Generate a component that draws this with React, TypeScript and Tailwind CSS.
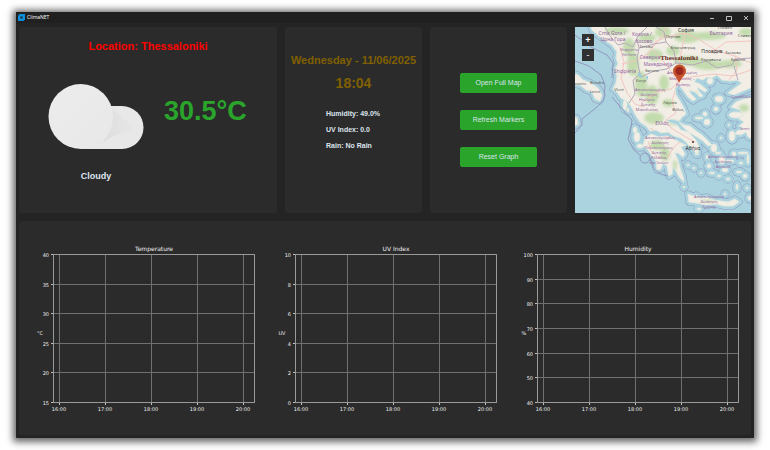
import React from "react";

const LAND = [
  // Balkans and mainland Greece
  "M15 -4 L17 3 L24 9 L31 14 L37 18 L42 25 L41 31 L43 37 L40 42 L42 49 L41 56 L38 62 L42 65 L46 71 L53 75 L57 81 L61 89 L65 95 L71 99 L75 104 L81 103 L86 106 L93 105 L99 109 L106 111 L111 115 L114 119 L119 124 L123 128 L124 120 L121 113 L116 108 L113 105 L106 103 L102 98 L96 96 L91 93 L97 92 L104 94 L107 90 L111 87 L109 81 L105 74 L101 68 L100 61 L104 58 L108 63 L113 70 L118 74 L121 72 L116 67 L114 63 L120 65 L125 70 L128 69 L123 63 L122 60 L130 65 L132 63 L125 57 L119 55 L122 51 L128 53 L132 50 L137 51 L142 48 L147 53 L155 54 L162 53 L167 56 L160 61 L153 66 L159 68 L168 64 L180 59 L180 -4 Z",
  // Peloponnese
  "M70 111 L76 107 L84 110 L92 109 L99 112 L106 116 L111 118 L106 120 L110 127 L108 130 L103 126 L100 126 L103 133 L105 141 L108 149 L109 155 L105 151 L101 144 L98 140 L97 147 L94 149 L92 139 L88 136 L86 142 L82 143 L81 134 L77 129 L73 123 L68 119 Z",
  // Anatolia
  "M180 70 L169 72 L161 75 L156 80 L165 83 L167 88 L163 91 L169 95 L164 99 L168 102 L162 104 L160 107 L166 108 L171 105 L173 110 L180 113 Z",
  // Italy
  "M-4 46 L3 48 L8 53 L16 56 L23 61 L27 68 L25 74 L20 72 L17 65 L11 63 L5 58 L-4 57 Z",
  "M-4 89 L2 91 L3 97 L-4 101 Z",
  // Crete
  "M113 167 L118 169 L121 168 L125 171 L132 170 L139 173 L146 174 L153 175 L160 172 L164 175 L158 179 L149 179 L141 177 L131 178 L121 176 L114 175 Z",
  // Evia
  "M104 95 L109 98 L115 99 L121 104 L127 108 L133 114 L137 118 L133 119 L128 114 L122 110 L115 106 L109 101 Z",
];

const ISLANDS: [number, number, number, number][] = [
  [50, 78, 2, 5], [62, 110, 3, 5], [65, 119, 3, 2], [60, 103, 2, 3], [53, 83, 1, 2],
  [135, 54, 3, 3], [144, 72, 4, 3], [141, 82, 2, 2], [124, 91, 4, 1], [130, 87, 2, 2], [132, 95, 3, 3],
  [161, 88, 7, 3], [154, 98, 1, 1], [157, 109, 3, 5], [146, 111, 1, 1],
  [139, 121, 3, 4], [143, 126, 3, 1], [147, 133, 3, 4], [150, 143, 3, 2], [144, 149, 2, 1],
  [132, 130, 1, 2], [134, 139, 2, 2], [126, 146, 1, 1], [137, 146, 3, 1], [155, 134, 4, 1],
  [159, 127, 2, 2], [168, 126, 5, 1], [173, 132, 1, 5], [166, 136, 2, 1], [164, 145, 3, 1],
  [170, 149, 2, 2], [153, 152, 2, 1], [162, 160, 1, 3], [172, 161, 1, 1], [175, 171, 2, 2],
  [113, 138, 1, 1], [119, 141, 1, 1], [121, 127, 1, 1], [109, 160, 1, 1], [150, 167, 1, 1], [124, 182, 2, 1],
];

const HILLS: [number, number, number, number][] = [
  [42, 4, 12, 4], [54, 20, 6, 9], [72, 11, 9, 4], [88, 5, 8, 6], [112, 10, 13, 6], [133, 9, 18, 4],
  [58, 37, 6, 12], [80, 28, 8, 6], [98, 24, 7, 5], [113, 34, 14, 5], [133, 38, 15, 5], [154, 37, 13, 4],
  [66, 57, 6, 13], [77, 68, 7, 10], [89, 56, 5, 8], [93, 76, 6, 4], [79, 91, 10, 6], [82, 118, 7, 5],
  [90, 127, 5, 7], [99, 96, 5, 2], [100, 138, 2, 5], [169, 81, 5, 4], [122, 66, 2, 1], [132, 174, 7, 1], [171, 5, 7, 4],
];

const LABELS: [number, number, string, string][] = [
  [37, 8, "Crna Gora /", "area"], [38, 14, "Црна Гора", "area"], [67, 9, "Kosova /", "area"], [69, 16, "Косово", "area"],
  [54, 24, "Shqipëria", "small"], [54, 29, "Verilore", "small"], [50, 46, "Shqipëria", "area"],
  [75, 32, "Северна", "area"], [83, 39, "Македонија", "area"], [146, 8, "България", "area"],
  [71, 21, "Тетово", "town"], [111, 5, "София", "city"], [98, 11, "Перник", "town"], [108, 22, "Благоевград", "town"],
  [137, 26, "Пловдив", "city"], [158, 27, "Хасково", "town"], [136, 34, "Кърджали", "town"], [163, 34, "Едирне", "town"],
  [150, 2, "Плевен", "town"], [170, 10, "Сливен", "town"], [77, 45, "Битола", "town"], [66, 55, "Korçë", "town"],
  [44, 64, "Vlorë", "town"], [22, 57, "Brindisi", "town"], [20, 66, "Lecce", "town"], [4, 58, "Taranto", "town"],
  [107, 47, "Αποκεντρωμένη", "small"], [107, 53, "Μακεδονίας –", "small"], [108, 59, "Θράκης", "small"],
  [75, 64, "Αποκεντρωμένη", "small"], [74, 69, "Διοίκηση", "small"], [72, 74, "Ηπείρου", "small"], [73, 79, "Δυτικής", "small"],
  [72, 84, "Μακεδονίας", "small"], [95, 77, "Λάρισα", "town"], [103, 84, "Βόλος", "town"], [87, 98, "Ελλάς", "area"],
  [85, 112, "Αποκεντρωμένη", "small"], [85, 117, "Διοίκηση", "small"], [84, 122, "Πελοποννήσου,", "small"],
  [84, 127, "Δυτικής", "small"], [84, 132, "Ελλάδας", "small"], [84, 137, "και Ιονίου", "small"], [118, 123, "Αθήνα", "city"],
  [148, 131, "Αποκεντρωμένη", "small"], [148, 136, "Διοίκηση", "small"], [148, 141, "Αιγαίου", "small"],
  [134, 171, "Αποκεντρωμένη", "small"], [134, 176, "Διοίκηση", "small"], [134, 181, "Κρήτης", "small"],
  [166, 71, "Çanakkale", "small"], [170, 103, "İzmir", "small"],
];

const LABEL_STYLE: Record<string, string> = {
  area: "fill-[#9467a0] text-[5px]",
  small: "fill-[#9467a0] text-[4px]",
  town: "fill-[#555555] text-[4px]",
  city: "fill-[#333333] text-[5px]",
};

function Coast({ className }: { className: string }) {
  return (
    <g className={className} strokeLinejoin="round">
      {LAND.map((d) => <path key={d} d={d} />)}
      {ISLANDS.map(([x, y, rx, ry]) => <ellipse key={`${x}-${y}`} cx={x} cy={y} rx={rx} ry={ry} />)}
    </g>
  );
}

function MapView() {
  return (
    <section aria-label="Map" className="relative overflow-hidden bg-[#aad3df]">
      <svg viewBox="0 0 176 186" preserveAspectRatio="xMidYMid slice" className="block h-full w-full font-['Noto_Sans',sans-serif]">
        <defs>
          <clipPath id="land">{LAND.map((d) => <path key={d} d={d} />)}</clipPath>
          <filter id="soft"><feGaussianBlur stdDeviation="1.5" /></filter>
        </defs>
        <Coast className="fill-none stroke-[#9197bd] stroke-[7]" />
        <Coast className="fill-none stroke-[#aad3df] stroke-[6]" />
        <path d="M0 34 L14 39 L26 48 L30 58 L29 72 L22 80 L7 92 L7 98 L0 106 M0 8 L16 20 L32 28 L38 36 L37 51 M37 70 L48 83 L57 93 L56 101 L53 112 L59 123 L65 128 M75 131 L78 141 L85 147 L93 149" className="fill-none stroke-[#9197bd] stroke-1" />
        <circle cx="70" cy="131" r="5" className="fill-none stroke-[#9197bd] stroke-1" />
        <Coast className="fill-[#f2eee6] stroke-[#dfe8de] stroke-1" />
        <g clipPath="url(#land)">
          <g filter="url(#soft)" className="fill-[#c3dcae]">
            {HILLS.map(([x, y, rx, ry]) => <ellipse key={`${x}-${y}`} cx={x} cy={y} rx={rx} ry={ry} />)}
          </g>
          <path d="M45 20 L49 35 L46 51 L52 66 L60 77 L69 80 M47 37 L63 33 L75 25 L80 15 L91 10 L110 6 L125 13 L142 24 L160 29 L176 36 M78 23 L89 35 L98 47 L103 56 L96 62 L82 65 L66 76 M102 58 L97 74 L101 86 L91 93 L96 101 L109 109 L120 115 M102 53 L116 50 L138 47 L158 49 L176 43 M110 6 L107 22 L104 36 L102 51 M75 101 L82 105 L91 110 L107 113 M73 114 L76 124 L86 132 M107 113 L98 121 L92 132 M92 0 L86 10 L78 20 M136 26 L151 15 L176 14 M154 53 L162 43 L160 29" className="fill-none stroke-[#f3c5c0] stroke-1" />
          <path d="M30 0 L35 9 L43 18 L50 16 L58 20 L63 9 L72 0 M62 13 L64 21 L62 32 L65 47 L58 53 L60 67 L54 76 M64 21 L79 17 L91 15 L99 24 L101 36 L92 42 L79 44 L66 50 M91 15 L89 5 L81 0 M101 36 L118 38 L131 34 L142 41 L157 38 L160 32 L176 31 M159 39 L163 53" className="fill-none stroke-[#b5a8b8] stroke-1" />
          <path d="M63 45 L66 47 L67 51 L64 50 Z M70 50 L73 49 L73 53 Z" className="fill-[#9bcbdc]" />
        </g>
        {LABELS.map(([x, y, text, kind]) => (
          <text key={`${x}-${y}`} x={x} y={y} textAnchor="middle" className={LABEL_STYLE[kind]}>{text}</text>
        ))}
        <rect x="117" y="114" width="2" height="2" className="fill-[#765a4d]" />
        <path d="M104 56 C102 50 98 48 98 44 A6 6 0 0 1 111 44 C111 48 107 50 104 56 Z" className="fill-[#c5542d]" />
        <circle cx="104.500" cy="44" r="4" className="fill-[#9b261e]" />
        <text x="104" y="33" textAnchor="middle" className="fill-[#652a22] font-['Liberation_Serif',serif] text-[7px] font-bold">Thessaloniki</text>
      </svg>
      <div className="absolute left-[7px] top-[7px] flex flex-col gap-[3px]">
        <button aria-label="Zoom in" className="flex size-3 items-center justify-center bg-[#303030] text-[9px] font-bold leading-none text-white">+</button>
        <button aria-label="Zoom out" className="flex size-3 items-center justify-center bg-[#303030] text-[9px] leading-none text-white">-</button>
      </div>
    </section>
  );
}

type ChartProps = { title: string; unit: string; ticks: number[] };

function Chart({ title, unit, ticks }: ChartProps) {
  const left = 25;
  const right = 227;
  const top = 15;
  const bottom = 163;
  const hours = ["16:00", "17:00", "18:00", "19:00", "20:00"];
  return (
    <svg viewBox="0 0 230 178" role="img" aria-label={title} className="block w-full fill-[#f0f0f0] font-['DejaVu_Sans',sans-serif] text-[5px]">
      <text x="126" y="11" textAnchor="middle" className="text-[6px]">{title}</text>
      {hours.map((hour, i) => (
        <g key={hour}>
          <path d={`M${31.5 + i * 46} ${top} V${bottom}`} className="stroke-[#707070] stroke-1" />
          <path d={`M${31.5 + i * 46} ${bottom} v2`} className="stroke-[#c0c0c0] stroke-1" />
          <text x={31 + i * 46} y="171" textAnchor="middle">{hour}</text>
        </g>
      ))}
      {ticks.map((tick, i) => {
        const y = Math.round(top + (i * (bottom - top)) / (ticks.length - 1)) - 0.5;
        return (
          <g key={tick}>
            <path d={`M${left} ${y} H${right}`} className="stroke-[#707070] stroke-1" />
            <path d={`M${left - 2} ${y} h2`} className="stroke-[#c0c0c0] stroke-1" />
            <text x={left - 4} y={y + 2} textAnchor="end">{tick}</text>
          </g>
        );
      })}
      <path d="M25.500 14.500 H226.500 V162.500 H25.500 Z" className="fill-none stroke-[#9a9a9a] stroke-1" />
      <text x="12" y="95" textAnchor="middle">{unit}</text>
    </svg>
  );
}

const CARD = "rounded-[3px] bg-[#2b2b2b]";
const ACTION = "h-5 w-[77px] rounded-xs bg-[#2aa42a]";

export default function App() {
  return (
    <div className="flex min-h-screen flex-col bg-white px-4 py-3 font-['Liberation_Sans',Arial,sans-serif]">
      <div className="flex flex-1 flex-col bg-[#242424] shadow-[0_1px_7px_3px_rgba(0,0,0,0.6)]">
        <header className="flex h-[11px] items-center bg-[#202020] pl-0.5 text-white">
          <svg viewBox="0 0 7 7" className="size-[7px]" aria-hidden="true">
            <path d="M1.500 0 H7 V5.500 L5.500 7 H0 V1.500 Z" className="fill-[#078bdc]" />
            <path d="M2.500 2 H5 V5 H2 V2.500 Z" className="fill-[#12344c] stroke-[#35b6f2] stroke-[0.5]" />
          </svg>
          <h1 className="ml-0.5 font-['Open_Sans',sans-serif] text-[5px] leading-[7px]">ClimaNET</h1>
          <div className="ml-auto flex items-center gap-[11px] pr-[5px]">
            <button aria-label="Minimize"><svg viewBox="0 0 6 6" className="block size-1.5 fill-none stroke-[#c0c0c0]"><path d="M1 3.500 H5" /></svg></button>
            <button aria-label="Maximize"><svg viewBox="0 0 6 6" className="block size-1.5 fill-none stroke-[#c0c0c0]"><path d="M0.500 1.500 H5.500 V5.500 H0.500 Z" /></svg></button>
            <button aria-label="Close"><svg viewBox="0 0 6 6" className="block size-1.5 fill-none stroke-[#c0c0c0]"><path d="M1 1 L5 5 M5 1 L1 5" /></svg></button>
          </div>
        </header>

        <main className="flex flex-1 flex-col gap-2 px-[3px] pb-[3px] pt-1">
          <div className="grid h-[186px] grid-cols-[258fr_137fr_137fr_176fr] gap-2">
            <section className={`${CARD} pt-3`}>
              <h2 className="text-center text-[11px] font-bold leading-[14px] text-[#ff0000]">Location: Thessaloniki</h2>
              <div className="mt-[30px] flex gap-5 pl-[29px]">
                <div className="flex flex-col items-center gap-5">
                  <svg viewBox="0 0 96 66" className="block h-[66px] w-24" role="img" aria-label="Cloud">
                    <defs>
                      <linearGradient id="puff" x1="0" y1="0" x2="1" y2="1">
                        <stop offset="0" stopColor="#ececec" /><stop offset="1" stopColor="#e8e8e8" />
                      </linearGradient>
                      <linearGradient id="shade" x1="0" y1="0" x2="1" y2="0">
                        <stop offset="0" stopColor="#dddddd" /><stop offset="1" stopColor="#e8e8e8" />
                      </linearGradient>
                    </defs>
                    <path d="M52 23 H74 A21.500 21.500 0 0 1 74 66 H33 Z" className="fill-[#e8e8e8]" />
                    <path d="M64 25 L90 49 Q72 46 52 62 Z" fill="url(#shade)" />
                    <path d="M33 1 A32.500 32.500 0 0 1 65 33 C65 49 56 60 43 66 H33 A32.500 32.500 0 0 1 33 1 Z" fill="url(#puff)" />
                    <path d="M33 66 H74 Q63 60 52 57 Z" className="fill-[#e8e8e8]" />
                  </svg>
                  <p className="text-[9px] font-bold leading-[14px] text-[#dce4ee]">Cloudy</p>
                </div>
                <p className="text-[27px] font-bold leading-[56px] text-[#2aa42a]">30.5°C</p>
              </div>
            </section>

            <section className={`${CARD} pt-[26px]`}>
              <p className="whitespace-nowrap text-center text-[11px] font-bold leading-[14px] text-[#806000]">Wednesday - 11/06/2025</p>
              <p className="mt-2 text-center text-[14px] font-bold leading-[16px] text-[#806000]">18:04</p>
              <div className="mt-[15px] flex flex-col pl-[41px] text-[7px] font-bold leading-[16px] text-[#dce4ee]">
                <p>Humidity: 49.0%</p>
                <p>UV Index: 0.0</p>
                <p>Rain: No Rain</p>
              </div>
            </section>

            <section className={`${CARD} flex flex-col items-center gap-[17px] pt-[46px] text-[7px] text-[#dce4ee]`}>
              <button className={ACTION}>Open Full Map</button>
              <button className={ACTION}>Refresh Markers</button>
              <button className={ACTION}>Reset Graph</button>
            </section>

            <MapView />
          </div>

          <section className={`${CARD} grid flex-1 grid-cols-3 items-center gap-3 px-[9px] pt-0.5`}>
            <Chart title="Temperature" unit="°C" ticks={[40, 35, 30, 25, 20, 15]} />
            <Chart title="UV Index" unit="UV" ticks={[10, 8, 6, 4, 2, 0]} />
            <Chart title="Humidity" unit="%" ticks={[100, 90, 80, 70, 60, 50, 40]} />
          </section>
        </main>
      </div>
    </div>
  );
}
